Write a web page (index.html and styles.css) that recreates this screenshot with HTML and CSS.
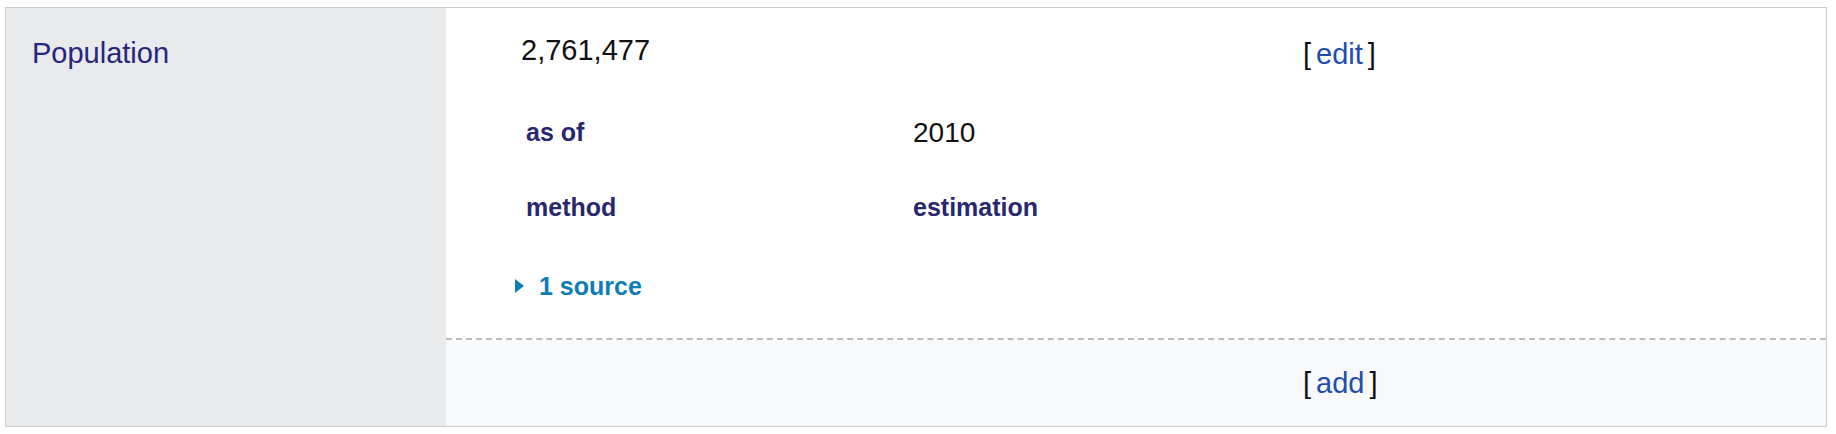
FILE: index.html
```html
<!DOCTYPE html>
<html>
<head>
<meta charset="utf-8">
<link rel="stylesheet" href="styles.css">
</head>
<body>
<div class="group">
  <div class="prop">
    <a class="prop-label">Population</a>
  </div>
  <div class="statements">
    <div class="statement">
      <div class="main-row">
        <div class="value">2,761,477</div>
        <div class="toolbar edit">[<a class="tb-link">edit</a>]</div>
      </div>
      <div class="qualifiers">
        <div class="qual">
          <a class="qual-label">as of</a>
          <span class="qual-value">2010</span>
        </div>
        <div class="qual">
          <a class="qual-label">method</a>
          <a class="qual-label">estimation</a>
        </div>
      </div>
      <div class="refs">
        <span class="tri"></span><a class="refs-link">1 source</a>
      </div>
    </div>
    <div class="add-row">
      <div class="toolbar">[<a class="tb-link">add</a>]</div>
    </div>
  </div>
</div>
</body>
</html>
```
FILE: styles.css
```css
html, body {
  margin: 0;
  padding: 0;
  background: #ffffff;
}
body {
  font-family: "Liberation Sans", Arial, sans-serif;
  font-size: 29px;
  color: #111;
  padding: 7px 9px 0 5px;
}
.group {
  display: flex;
  border: 1px solid #cbcccf;
  height: 418px;
}
.prop {
  width: 440px;
  flex: none;
  background: #e9eaeb;
  padding: 29px 0 0 26px;
  box-sizing: border-box;
}
.prop-label {
  color: #26267e;
}
.statements {
  flex: 1;
  display: flex;
  flex-direction: column;
}
.statement {
  height: 332px;
  border-bottom: 2px dashed #bdbdbd;
  box-sizing: border-box;
  padding: 24px 0 0 75px;
}
.main-row {
  display: flex;
  height: 36px;
  align-items: center;
}
.value {
  width: 782px;
}
.toolbar {
  color: #111;
}
.edit {
  margin-top: 8px;
}
.tb-link {
  color: #1d4eae;
  padding: 0 5px;
}
.qualifiers {
  padding: 27px 0 0 5px;
}
.qual {
  display: flex;
  height: 75px;
  align-items: center;
}
.qual-label {
  color: #28286f;
  font-weight: bold;
  font-size: 25px;
}
.qual-label:first-child {
  width: 387px;
}
.qual-value {
  font-size: 28px;
  color: #111;
}
.refs {
  display: flex;
  align-items: center;
  color: #0d7db8;
  margin-top: 21px;
  height: 40px;
}
.tri {
  width: 0;
  height: 0;
  border-top: 7px solid transparent;
  border-bottom: 7px solid transparent;
  border-left: 9px solid #0d7db8;
  margin: 0 15px 0 -6px;
}
.refs-link {
  color: #0d7db8;
  font-weight: bold;
  font-size: 25px;
}
.add-row {
  flex: 1;
  background: #f8f9fa;
  padding: 0 0 0 857px;
  display: flex;
  align-items: center;
}
```
